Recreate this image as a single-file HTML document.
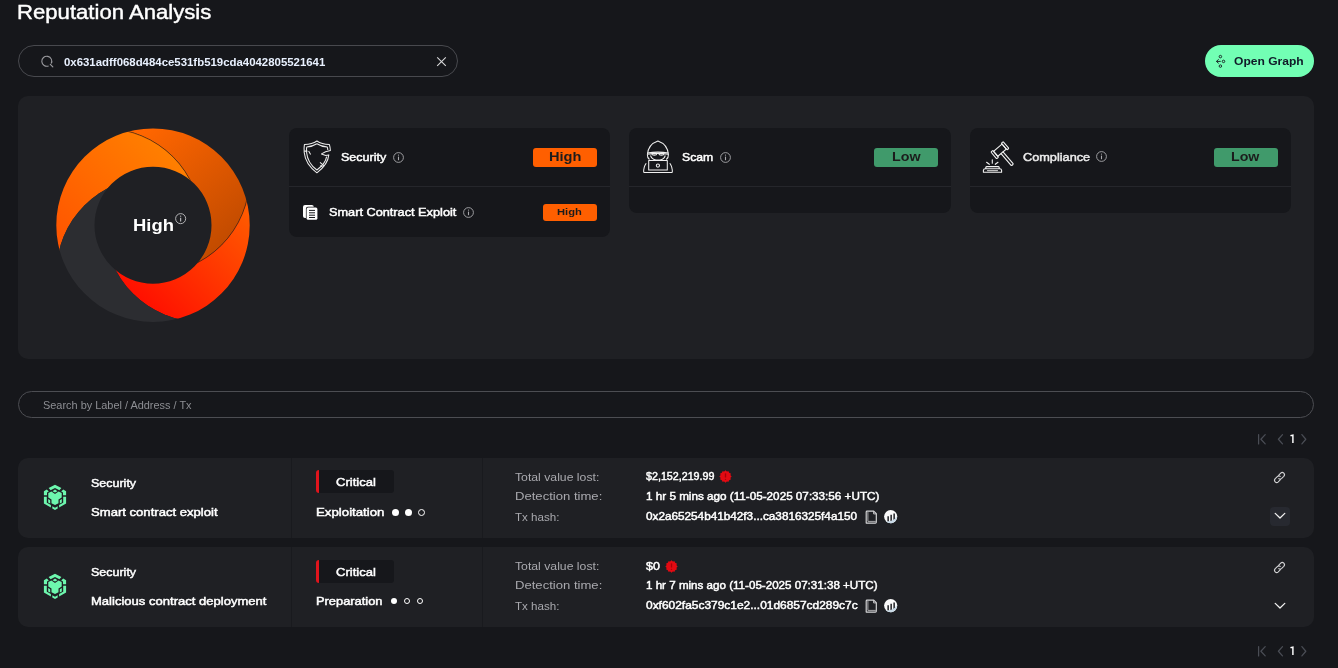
<!DOCTYPE html>
<html><head><meta charset="utf-8"><style>
*{box-sizing:border-box;margin:0;padding:0}
html,body{width:1338px;height:668px;overflow:hidden;background:#16171b;font-family:"Liberation Sans",sans-serif;color:#fff}
.abs{position:absolute}
.t{position:absolute;white-space:nowrap}
svg{position:absolute;overflow:visible}
</style></head><body>
<div class="t" style="left:16.69px;top:2.37px;font-size:20px;line-height:20px;font-weight:normal;color:#fff;letter-spacing:0.000px;transform:scaleX(1.1060);transform-origin:0 0;-webkit-text-stroke:0.4px #fff;">Reputation Analysis</div>
<div class="abs" style="left:18px;top:45px;width:440px;height:32px;border:1px solid #48494e;border-radius:16px"></div>
<svg style="left:40px;top:54px" width="16" height="16" viewBox="0 0 16 16"><path d="M8.6,11.9 A5,5 0 1,1 11.2,9.6" fill="none" stroke="#9a9a9e" stroke-width="1.1"/><path d="M10.3,10.4 L12.8,12.9" stroke="#9a9a9e" stroke-width="1.2" stroke-linecap="round"/></svg>
<div class="t" style="left:64.10px;top:57.43px;font-size:10.6px;line-height:10.6px;font-weight:bold;color:#e9f1ff;letter-spacing:0.000px;transform:scaleX(1.0767);transform-origin:0 0;">0x631adff068d484ce531fb519cda4042805521641</div>
<svg style="left:436px;top:56px" width="11" height="11" viewBox="0 0 11 11"><path d="M1.2,1.4 L9.8,9.9 M9.8,1.4 L1.2,9.9" stroke="#d8d8da" stroke-width="1.1"/></svg>
<div class="abs" style="left:1205px;top:45px;width:109px;height:32px;border-radius:16px;background:#72ffb4"></div>
<svg style="left:1213px;top:53px" width="14" height="16" viewBox="0 0 14 16"><g fill="none" stroke="#1b2a2a" stroke-width="1.0"><circle cx="7.4" cy="3.6" r="1.25"/><circle cx="10.5" cy="8.4" r="1.25"/><circle cx="7.4" cy="13.1" r="1.25"/><path d="M3.4,8.4 H7.7 M5.7,6.3 L3.4,8.4 L5.7,10.4"/></g></svg>
<div class="t" style="left:1233.90px;top:56.23px;font-size:10.6px;line-height:10.6px;font-weight:bold;color:#101a28;letter-spacing:0.000px;transform:scaleX(1.1392);transform-origin:0 0;">Open Graph</div>
<div class="abs" style="left:18px;top:96px;width:1296px;height:263px;border-radius:10px;background:#1f2024"></div>
<svg style="left:0;top:0" width="300" height="360" viewBox="0 0 300 360"><defs><clipPath id="cL"><circle cx="104.65" cy="225.2" r="96.7"/></clipPath><mask id="mL" maskUnits="userSpaceOnUse" x="0" y="0" width="300" height="360"><rect width="300" height="360" fill="#fff"/><circle cx="104.65" cy="225.2" r="96.7" fill="#000"/></mask><clipPath id="cU"><circle cx="153" cy="176.85" r="96.7"/></clipPath><mask id="mU" maskUnits="userSpaceOnUse" x="0" y="0" width="300" height="360"><rect width="300" height="360" fill="#fff"/><circle cx="153" cy="176.85" r="96.7" fill="#000"/></mask><clipPath id="cR"><circle cx="201.35" cy="225.2" r="96.7"/></clipPath><mask id="mR" maskUnits="userSpaceOnUse" x="0" y="0" width="300" height="360"><rect width="300" height="360" fill="#fff"/><circle cx="201.35" cy="225.2" r="96.7" fill="#000"/></mask><clipPath id="cD"><circle cx="153" cy="273.55" r="96.7"/></clipPath><mask id="mD" maskUnits="userSpaceOnUse" x="0" y="0" width="300" height="360"><rect width="300" height="360" fill="#fff"/><circle cx="153" cy="273.55" r="96.7" fill="#000"/></mask><linearGradient id="gO" gradientUnits="userSpaceOnUse" x1="175" y1="145" x2="65" y2="250"><stop offset="0" stop-color="#ff8200"/><stop offset="1" stop-color="#ff5500"/></linearGradient><linearGradient id="gD" gradientUnits="userSpaceOnUse" x1="145" y1="130" x2="235" y2="235"><stop offset="0" stop-color="#ff6600"/><stop offset="1" stop-color="#c24b00"/></linearGradient><linearGradient id="gR" gradientUnits="userSpaceOnUse" x1="250" y1="215" x2="150" y2="315"><stop offset="0" stop-color="#ff5a00"/><stop offset="1" stop-color="#ff0e00"/></linearGradient><clipPath id="ring"><path clip-rule="evenodd" d="M56.3,225.2a96.7,96.7 0 1,0 193.4,0a96.7,96.7 0 1,0 -193.4,0Z M94.5,225.2a58.5,58.5 0 1,0 117.0,0a58.5,58.5 0 1,0 -117.0,0Z"/></clipPath></defs><g clip-path="url(#ring)"><g clip-path="url(#cL)"><rect width="300" height="360" fill="url(#gO)" mask="url(#mD)"/></g><g clip-path="url(#cU)"><rect width="300" height="360" fill="url(#gD)" mask="url(#mL)"/></g><g clip-path="url(#cR)"><rect width="300" height="360" fill="url(#gR)" mask="url(#mU)"/></g><g clip-path="url(#cD)"><rect width="300" height="360" fill="#2c2d31" mask="url(#mR)"/></g><g clip-path="url(#cU)"><circle cx="104.65" cy="225.2" r="96.7" fill="none" stroke="#1a1a1a" stroke-opacity="0.8" stroke-width="0.7"/></g><g clip-path="url(#cR)"><circle cx="153" cy="176.85" r="96.7" fill="none" stroke="#1a1a1a" stroke-opacity="0.8" stroke-width="0.7"/></g></g></svg>
<div class="t" style="left:132.76px;top:217.19px;font-size:16.2px;line-height:16.2px;font-weight:bold;color:#fff;letter-spacing:0.000px;transform:scaleX(1.1386);transform-origin:0 0;">High</div>
<svg style="left:174.5px;top:212.9px" width="11.3" height="11.3" viewBox="0 0 11 11"><circle cx="5.5" cy="5.5" r="4.9" fill="none" stroke="#bdbdbf" stroke-width="0.9"/><path d="M5.5,4.6 V8.2" stroke="#bdbdbf" stroke-width="1.1"/><circle cx="5.5" cy="3.1" r="0.6" fill="#bdbdbf"/></svg>
<div class="abs" style="left:289px;top:128px;width:321px;height:109px;border-radius:8px;background:#16171b"></div>
<div class="abs" style="left:289px;top:186px;width:321px;height:1px;background:#25262b"></div>
<div class="abs" style="left:629px;top:128px;width:322px;height:85px;border-radius:8px;background:#16171b"></div>
<div class="abs" style="left:629px;top:186px;width:322px;height:1px;background:#25262b"></div>
<div class="abs" style="left:970px;top:128px;width:321px;height:85px;border-radius:8px;background:#16171b"></div>
<div class="abs" style="left:970px;top:186px;width:321px;height:1px;background:#25262b"></div>
<svg style="left:302px;top:140px" width="30" height="34" viewBox="0 0 30 34"><g fill="none" stroke="#ececec" stroke-width="1.05" stroke-linejoin="round">
<path d="M14.9,1 Q19.6,4.3 27.4,4.6 Q28.3,7.5 28.4,10.4 L23.6,11.8 L19.5,13.9 L23.7,15.4 L26.8,14.9 Q26,24.5 14.9,32.8 Q3.4,24.3 2.2,12.5 Q1.8,8 2.4,4.6 Q10.2,4.3 14.9,1Z"/>
<path d="M14.9,3.8 Q19.2,6.6 25.2,7 Q25.8,8.8 25.8,10" />
<path d="M24.6,16.6 Q23.6,23.4 14.9,30 Q5.6,23.2 4.6,12.5 Q4.3,9 4.7,7 Q10.6,6.6 14.9,3.8"/>
<path d="M2.2,11.1 H5.4 M6.6,11.1 L8.6,14.6 M18,22.4 L22.4,26.2 M18,25.6 L21.2,27.4"/>
</g></svg>
<div class="t" style="left:341.40px;top:151.80px;font-size:11.1px;line-height:11.1px;font-weight:normal;color:#fff;letter-spacing:0.000px;transform:scaleX(1.1301);transform-origin:0 0;-webkit-text-stroke:0.45px #fff;">Security</div>
<svg style="left:392.5px;top:151.6px" width="11" height="11" viewBox="0 0 11 11"><circle cx="5.5" cy="5.5" r="4.9" fill="none" stroke="#a9a9ad" stroke-width="0.9"/><path d="M5.5,4.6 V8.2" stroke="#a9a9ad" stroke-width="1.1"/><circle cx="5.5" cy="3.1" r="0.6" fill="#a9a9ad"/></svg>
<div class="abs" style="left:533px;top:148px;width:64px;height:19px;border-radius:3px;background:#ff5f00"></div>
<div class="t" style="left:549.40px;top:150.50px;font-size:12.4px;line-height:12.4px;font-weight:bold;color:#1c1c1c;letter-spacing:0.000px;transform:scaleX(1.1796);transform-origin:0 0;">High</div>
<svg style="left:302px;top:204px" width="17" height="17" viewBox="0 0 17 17">
<rect x="1" y="1" width="10.8" height="13" rx="2" fill="#fff"/>
<rect x="3.9" y="2.7" width="12.2" height="13.8" rx="2" fill="#16171b"/>
<rect x="4.6" y="3.4" width="10.8" height="12.4" rx="1.5" fill="#fff"/>
<path d="M7,6.4 H13 M7,8.8 H13 M7,11.2 H13 M7,13.5 H13" stroke="#16171b" stroke-width="1"/>
</svg>
<div class="t" style="left:328.90px;top:206.93px;font-size:10.6px;line-height:10.6px;font-weight:normal;color:#fff;letter-spacing:0.000px;transform:scaleX(1.2015);transform-origin:0 0;-webkit-text-stroke:0.45px #fff;">Smart Contract Exploit</div>
<svg style="left:463.4px;top:206.7px" width="11" height="11" viewBox="0 0 11 11"><circle cx="5.5" cy="5.5" r="4.9" fill="none" stroke="#a9a9ad" stroke-width="0.9"/><path d="M5.5,4.6 V8.2" stroke="#a9a9ad" stroke-width="1.1"/><circle cx="5.5" cy="3.1" r="0.6" fill="#a9a9ad"/></svg>
<div class="abs" style="left:543px;top:204px;width:54px;height:17px;border-radius:3px;background:#ff5f00"></div>
<div class="t" style="left:557.20px;top:207.27px;font-size:9.6px;line-height:9.6px;font-weight:bold;color:#1c1c1c;letter-spacing:0.000px;transform:scaleX(1.1653);transform-origin:0 0;">High</div>
<svg style="left:642px;top:140px" width="32" height="34" viewBox="0 0 32 34"><g fill="none" stroke="#f0f0f0" stroke-width="1.05" stroke-linejoin="round">
<path d="M5.4,14.8 Q6,4.5 15.9,1.1 Q25.8,4.5 26.4,14.8 Q26.6,17.6 24.3,19.5"/>
<path d="M5.4,14.8 Q5.2,17.6 7.5,19.5"/>
<path d="M5.3,13 Q15.9,11.3 26.5,13"/>
<path d="M5.3,14.2 Q15.9,12.5 26.5,14.2"/>
<ellipse cx="12.3" cy="14" rx="2.4" ry="1.1"/><ellipse cx="19.5" cy="14" rx="2.4" ry="1.1"/>
<path d="M8.5,15.5 Q10,19.5 14,20 H18 Q22,19.5 23.3,15.5"/>
<rect x="6.7" y="20.5" width="18.6" height="9.5"/>
<circle cx="15.9" cy="25.6" r="1.6"/>
<path d="M1.7,32.4 H30.3 M1.7,32.4 Q1.4,27 4.2,23.3 M30.3,32.4 Q30.6,27 27.8,23.3"/>
</g></svg>
<div class="t" style="left:681.80px;top:151.87px;font-size:10.9px;line-height:10.9px;font-weight:normal;color:#fff;letter-spacing:0.000px;transform:scaleX(1.1201);transform-origin:0 0;-webkit-text-stroke:0.45px #fff;">Scam</div>
<svg style="left:719.5px;top:151.6px" width="11" height="11" viewBox="0 0 11 11"><circle cx="5.5" cy="5.5" r="4.9" fill="none" stroke="#a9a9ad" stroke-width="0.9"/><path d="M5.5,4.6 V8.2" stroke="#a9a9ad" stroke-width="1.1"/><circle cx="5.5" cy="3.1" r="0.6" fill="#a9a9ad"/></svg>
<div class="abs" style="left:874px;top:148px;width:64px;height:19px;border-radius:3px;background:#409a6b"></div>
<div class="t" style="left:891.80px;top:150.50px;font-size:12.4px;line-height:12.4px;font-weight:bold;color:#1c1c1c;letter-spacing:0.000px;transform:scaleX(1.1537);transform-origin:0 0;">Low</div>
<svg style="left:981px;top:139px" width="36" height="36" viewBox="0 0 36 36"><g fill="none" stroke="#f2f2f2" stroke-width="1.1" stroke-linejoin="round" stroke-linecap="round">
<g transform="translate(18.9 11.2) rotate(49.5)"><rect x="-3.3" y="-5.6" width="6.6" height="11.2"/><rect x="-4.4" y="-8" width="8.8" height="2.4" rx="0.6"/><rect x="-4.4" y="5.6" width="8.8" height="2.4" rx="0.6"/><path d="M3.3,-1.3 H18.8 Q20.1,0 18.8,1.3 H3.3"/></g>
<path d="M2.4,33.3 H20.6 V31.3 Q20.4,30 18.8,29.8 H4.2 Q2.6,30 2.4,31.3Z M4.8,29.8 V28.4 Q5,27.6 6,27.6 H17 Q18,27.6 18.2,28.4 V29.8"/><path d="M6.5,31.6 H16.5" stroke="#bdbdbd"/>
<path d="M11.3,20.8 V24.2 M5.6,23.3 L8.3,25.3 M17,23.3 L14.3,25.3"/>
</g></svg>
<div class="t" style="left:1022.60px;top:151.60px;font-size:11.1px;line-height:11.1px;font-weight:normal;color:#ececec;letter-spacing:0.000px;transform:scaleX(1.1471);transform-origin:0 0;-webkit-text-stroke:0.45px #ececec;">Compliance</div>
<svg style="left:1096.4px;top:151.4px" width="11" height="11" viewBox="0 0 11 11"><circle cx="5.5" cy="5.5" r="4.9" fill="none" stroke="#a9a9ad" stroke-width="0.9"/><path d="M5.5,4.6 V8.2" stroke="#a9a9ad" stroke-width="1.1"/><circle cx="5.5" cy="3.1" r="0.6" fill="#a9a9ad"/></svg>
<div class="abs" style="left:1214px;top:148px;width:64px;height:19px;border-radius:3px;background:#409a6b"></div>
<div class="t" style="left:1231.20px;top:150.50px;font-size:12.4px;line-height:12.4px;font-weight:bold;color:#1c1c1c;letter-spacing:0.000px;transform:scaleX(1.1457);transform-origin:0 0;">Low</div>
<div class="abs" style="left:18px;top:391px;width:1296px;height:27px;border:1px solid #4c4d52;border-radius:14px"></div>
<div class="t" style="left:43.20px;top:399.84px;font-size:10.7px;line-height:10.7px;font-weight:normal;color:#8d8e93;letter-spacing:0.000px;transform:scaleX(1.0219);transform-origin:0 0;">Search by Label / Address / Tx</div>
<svg style="left:1250px;top:431px" width="64" height="16" viewBox="0 0 64 16"><g fill="none" stroke="#4a4d55" stroke-width="1.25" stroke-linecap="round" stroke-linejoin="round"><path d="M8.6,3.6 V12.9 M15.2,3.6 L10.9,8.25 L15.2,12.9"/><path d="M32.5,3.6 L28.4,8.25 L32.5,12.9"/><path d="M51.9,3.6 L55.8,8.25 L51.9,12.9"/></g><path d="M40.4,4.6 L42.9,4.2 V12.1" fill="none" stroke="#fff" stroke-width="1.45" stroke-linejoin="miter"/></svg>
<svg style="left:1250px;top:643px" width="64" height="16" viewBox="0 0 64 16"><g fill="none" stroke="#4a4d55" stroke-width="1.25" stroke-linecap="round" stroke-linejoin="round"><path d="M8.6,3.6 V12.9 M15.2,3.6 L10.9,8.25 L15.2,12.9"/><path d="M32.5,3.6 L28.4,8.25 L32.5,12.9"/><path d="M51.9,3.6 L55.8,8.25 L51.9,12.9"/></g><path d="M40.4,4.6 L42.9,4.2 V12.1" fill="none" stroke="#fff" stroke-width="1.45" stroke-linejoin="miter"/></svg>
<div class="abs" style="left:18px;top:458px;width:1296px;height:80px;border-radius:10px;background:#1f2024"></div>
<div class="abs" style="left:291px;top:458px;width:1px;height:80px;background:#191a1e"></div>
<div class="abs" style="left:482px;top:458px;width:1px;height:80px;background:#191a1e"></div>
<svg style="left:42px;top:483px" width="26" height="29" viewBox="0 0 26 29"><g fill="#6df7ae"><polygon points="6.6,5.1 13,1.7 19.4,5.1 17.4,7.3 13,5.1 8.6,7.3"/><polygon points="1.9,8.3 4.8,6.5 6.8,8.6 5.0,9.6 5.0,12.2 1.9,12.2"/><polygon points="24.1,8.3 21.2,6.5 19.2,8.6 21.0,9.6 21.0,12.2 24.1,12.2"/><polygon points="1.9,13.7 4.8,13.7 4.8,19.7 8.9,22.0 8.9,24.5 1.9,20.6"/><polygon points="24.1,13.7 21.2,13.7 21.2,19.7 17.1,22.0 17.1,24.5 24.1,20.6"/><polygon points="6.3,10.1 9.4,8.6 13,10.9 16.6,8.6 19.7,10.1 19.7,14.6 16.5,16.4 16.5,20.3 13,22.0 9.5,20.3 9.5,16.4 6.3,14.6"/><polygon points="13,6.5 15.5,8.2 13,9.6 10.5,8.2"/><polygon points="6.2,16.0 8.2,17.2 8.2,20.5 6.2,19.4"/><polygon points="19.8,16.0 17.8,17.2 17.8,20.5 19.8,19.4"/><polygon points="10.3,23.2 13,24.7 15.7,23.2 15.7,25.4 13,27.0 10.3,25.4"/></g></svg>
<div class="t" style="left:91.10px;top:477.50px;font-size:11.1px;line-height:11.1px;font-weight:normal;color:#fff;letter-spacing:0.000px;transform:scaleX(1.1252);transform-origin:0 0;-webkit-text-stroke:0.45px #fff;">Security</div>
<div class="t" style="left:91.10px;top:506.79px;font-size:11.0px;line-height:11.0px;font-weight:normal;color:#fff;letter-spacing:0.000px;transform:scaleX(1.1898);transform-origin:0 0;-webkit-text-stroke:0.45px #fff;">Smart contract exploit</div>
<div class="abs" style="left:316px;top:470px;width:78px;height:23px;border-radius:3px;background:#16171b;border-left:3px solid #e0141c"></div>
<div class="t" style="left:336.30px;top:476.52px;font-size:11.2px;line-height:11.2px;font-weight:normal;color:#fff;letter-spacing:0.000px;transform:scaleX(1.1662);transform-origin:0 0;-webkit-text-stroke:0.45px #fff;">Critical</div>
<div class="t" style="left:316.20px;top:506.97px;font-size:10.9px;line-height:10.9px;font-weight:normal;color:#fff;letter-spacing:0.000px;transform:scaleX(1.2161);transform-origin:0 0;-webkit-text-stroke:0.45px #fff;">Exploitation</div>
<div class="abs" style="left:392.1px;top:508.6px;width:7.1px;height:7.1px;border-radius:50%;background:#fff"></div>
<div class="abs" style="left:404.9px;top:508.6px;width:7.1px;height:7.1px;border-radius:50%;background:#fff"></div>
<div class="abs" style="left:417.7px;top:508.6px;width:7.1px;height:7.1px;border-radius:50%;border:1.3px solid #fff"></div>
<div class="t" style="left:515.40px;top:471.83px;font-size:10.6px;line-height:10.6px;font-weight:normal;color:#a9a9ae;letter-spacing:0.000px;transform:scaleX(1.1544);transform-origin:0 0;">Total value lost:</div>
<div class="t" style="left:515.40px;top:491.03px;font-size:10.6px;line-height:10.6px;font-weight:normal;color:#a9a9ae;letter-spacing:0.000px;transform:scaleX(1.2351);transform-origin:0 0;">Detection time:</div>
<div class="t" style="left:515.40px;top:511.83px;font-size:10.6px;line-height:10.6px;font-weight:normal;color:#a9a9ae;letter-spacing:0.000px;transform:scaleX(1.0937);transform-origin:0 0;">Tx hash:</div>
<div class="t" style="left:646.30px;top:471.01px;font-size:10.5px;line-height:10.5px;font-weight:normal;color:#fff;letter-spacing:0.000px;transform:scaleX(1.0192);transform-origin:0 0;-webkit-text-stroke:0.45px #fff;">$2,152,219.99</div>
<svg style="left:719.1px;top:469.8px" width="13" height="13" viewBox="0 0 12.8 12.8"><polygon points="6.40,0.35 7.71,1.52 9.42,1.16 9.97,2.83 11.64,3.38 11.28,5.09 12.45,6.40 11.28,7.71 11.64,9.42 9.97,9.97 9.42,11.64 7.71,11.28 6.40,12.45 5.09,11.28 3.38,11.64 2.83,9.97 1.16,9.43 1.52,7.71 0.35,6.40 1.52,5.09 1.16,3.37 2.83,2.83 3.37,1.16 5.09,1.52" fill="#e30a12"/><path d="M6.4,3.3 V7.4" stroke="#a80008" stroke-width="1.3"/><circle cx="6.4" cy="9.2" r="0.7" fill="#a80008"/></svg>
<div class="t" style="left:646.30px;top:491.11px;font-size:10.5px;line-height:10.5px;font-weight:normal;color:#fff;letter-spacing:0.000px;transform:scaleX(1.1132);transform-origin:0 0;-webkit-text-stroke:0.45px #fff;">1 hr 5 mins ago (11-05-2025 07:33:56 +UTC)</div>
<div class="t" style="left:646.30px;top:511.41px;font-size:10.5px;line-height:10.5px;font-weight:normal;color:#fff;letter-spacing:0.000px;transform:scaleX(1.1189);transform-origin:0 0;-webkit-text-stroke:0.45px #fff;">0x2a65254b41b42f3...ca3816325f4a150</div>
<svg style="left:865.3px;top:509.5px" width="13" height="15" viewBox="0 0 13 15"><g fill="none" stroke-linejoin="round"><path d="M1.2,13.1 V2 Q1.2,1.1 2.1,1.1 H8.7 L11.3,3.7 V12.2 Q11.3,13.1 10.4,13.1 Z" stroke="#d6d6d8" stroke-width="1.15"/><path d="M2.9,1.6 V11.4 H10.9" stroke="#a8a8ab" stroke-width="1"/><path d="M8.6,1.3 V3.9 H11.1" stroke="#d6d6d8" stroke-width="0.9"/></g></svg>
<svg style="left:883.6px;top:509.7px" width="14" height="14" viewBox="0 0 14 14">
<circle cx="6.7" cy="6.6" r="6.6" fill="#fafafa"/>
<path d="M1.6,11.3 Q8,12.2 13,6.3 Q13.2,10.8 8.6,13 Q4.3,13.8 1.6,11.3Z" fill="#c8d9e6"/>
<path d="M3.4,11.2 V6.3 H4.9 V11.2Z M6.4,11 V4.7 H7.9 V10.6Z M9.4,9.7 V3.4 H10.9 V8.7Z" fill="#1f2024"/>
</svg>
<svg style="left:1273.3px;top:471px" width="13" height="13" viewBox="0 0 13 13"><g fill="none" stroke="#d2d2d4" stroke-width="1.1" stroke-linecap="round"><path d="M5.6,4.3 L7.7,2.2 Q9.3,0.7 10.8,2.2 Q12.3,3.7 10.8,5.3 L8.7,7.4 Q7.2,8.8 5.8,7.6"/><path d="M7.4,8.7 L5.3,10.8 Q3.7,12.3 2.2,10.8 Q0.7,9.3 2.2,7.7 L4.3,5.6 Q5.8,4.2 7.2,5.4"/></g></svg>
<div class="abs" style="left:1270px;top:507px;width:20px;height:19px;border-radius:4px;background:#272930"></div>
<svg style="left:1274px;top:512px" width="12" height="8" viewBox="0 0 12 8"><path d="M1.2,1.4 L6,6 L10.8,1.4" fill="none" stroke="#f2f2f2" stroke-width="1.3" stroke-linecap="round" stroke-linejoin="round"/></svg>
<div class="abs" style="left:18px;top:547px;width:1296px;height:80px;border-radius:10px;background:#1f2024"></div>
<div class="abs" style="left:291px;top:547px;width:1px;height:80px;background:#191a1e"></div>
<div class="abs" style="left:482px;top:547px;width:1px;height:80px;background:#191a1e"></div>
<svg style="left:42px;top:572px" width="26" height="29" viewBox="0 0 26 29"><g fill="#6df7ae"><polygon points="6.6,5.1 13,1.7 19.4,5.1 17.4,7.3 13,5.1 8.6,7.3"/><polygon points="1.9,8.3 4.8,6.5 6.8,8.6 5.0,9.6 5.0,12.2 1.9,12.2"/><polygon points="24.1,8.3 21.2,6.5 19.2,8.6 21.0,9.6 21.0,12.2 24.1,12.2"/><polygon points="1.9,13.7 4.8,13.7 4.8,19.7 8.9,22.0 8.9,24.5 1.9,20.6"/><polygon points="24.1,13.7 21.2,13.7 21.2,19.7 17.1,22.0 17.1,24.5 24.1,20.6"/><polygon points="6.3,10.1 9.4,8.6 13,10.9 16.6,8.6 19.7,10.1 19.7,14.6 16.5,16.4 16.5,20.3 13,22.0 9.5,20.3 9.5,16.4 6.3,14.6"/><polygon points="13,6.5 15.5,8.2 13,9.6 10.5,8.2"/><polygon points="6.2,16.0 8.2,17.2 8.2,20.5 6.2,19.4"/><polygon points="19.8,16.0 17.8,17.2 17.8,20.5 19.8,19.4"/><polygon points="10.3,23.2 13,24.7 15.7,23.2 15.7,25.4 13,27.0 10.3,25.4"/></g></svg>
<div class="t" style="left:91.10px;top:566.50px;font-size:11.1px;line-height:11.1px;font-weight:normal;color:#fff;letter-spacing:0.000px;transform:scaleX(1.1252);transform-origin:0 0;-webkit-text-stroke:0.45px #fff;">Security</div>
<div class="t" style="left:91.10px;top:595.79px;font-size:11.0px;line-height:11.0px;font-weight:normal;color:#fff;letter-spacing:0.000px;transform:scaleX(1.1859);transform-origin:0 0;-webkit-text-stroke:0.45px #fff;">Malicious contract deployment</div>
<div class="abs" style="left:316px;top:560px;width:78px;height:23px;border-radius:3px;background:#16171b;border-left:3px solid #e0141c"></div>
<div class="t" style="left:336.30px;top:566.52px;font-size:11.2px;line-height:11.2px;font-weight:normal;color:#fff;letter-spacing:0.000px;transform:scaleX(1.1662);transform-origin:0 0;-webkit-text-stroke:0.45px #fff;">Critical</div>
<div class="t" style="left:316.20px;top:595.97px;font-size:10.9px;line-height:10.9px;font-weight:normal;color:#fff;letter-spacing:0.000px;transform:scaleX(1.1805);transform-origin:0 0;-webkit-text-stroke:0.45px #fff;">Preparation</div>
<div class="abs" style="left:391.0px;top:597.9px;width:6.4px;height:6.4px;border-radius:50%;background:#fff"></div>
<div class="abs" style="left:403.8px;top:597.9px;width:6.4px;height:6.4px;border-radius:50%;border:1.3px solid #fff"></div>
<div class="abs" style="left:416.6px;top:597.9px;width:6.4px;height:6.4px;border-radius:50%;border:1.3px solid #fff"></div>
<div class="t" style="left:515.40px;top:560.83px;font-size:10.6px;line-height:10.6px;font-weight:normal;color:#a9a9ae;letter-spacing:0.000px;transform:scaleX(1.1544);transform-origin:0 0;">Total value lost:</div>
<div class="t" style="left:515.40px;top:580.03px;font-size:10.6px;line-height:10.6px;font-weight:normal;color:#a9a9ae;letter-spacing:0.000px;transform:scaleX(1.2351);transform-origin:0 0;">Detection time:</div>
<div class="t" style="left:515.40px;top:600.83px;font-size:10.6px;line-height:10.6px;font-weight:normal;color:#a9a9ae;letter-spacing:0.000px;transform:scaleX(1.0937);transform-origin:0 0;">Tx hash:</div>
<div class="t" style="left:646.30px;top:561.01px;font-size:10.5px;line-height:10.5px;font-weight:normal;color:#fff;letter-spacing:0.000px;transform:scaleX(1.1909);transform-origin:0 0;-webkit-text-stroke:0.45px #fff;">$0</div>
<svg style="left:664.9px;top:559.8px" width="13" height="13" viewBox="0 0 12.8 12.8"><polygon points="6.40,0.35 7.71,1.52 9.42,1.16 9.97,2.83 11.64,3.38 11.28,5.09 12.45,6.40 11.28,7.71 11.64,9.42 9.97,9.97 9.42,11.64 7.71,11.28 6.40,12.45 5.09,11.28 3.38,11.64 2.83,9.97 1.16,9.43 1.52,7.71 0.35,6.40 1.52,5.09 1.16,3.37 2.83,2.83 3.37,1.16 5.09,1.52" fill="#e30a12"/><path d="M6.4,3.3 V7.4" stroke="#a80008" stroke-width="1.3"/><circle cx="6.4" cy="9.2" r="0.7" fill="#a80008"/></svg>
<div class="t" style="left:646.30px;top:580.11px;font-size:10.5px;line-height:10.5px;font-weight:normal;color:#fff;letter-spacing:0.000px;transform:scaleX(1.1046);transform-origin:0 0;-webkit-text-stroke:0.45px #fff;">1 hr 7 mins ago (11-05-2025 07:31:38 +UTC)</div>
<div class="t" style="left:646.30px;top:600.41px;font-size:10.5px;line-height:10.5px;font-weight:normal;color:#fff;letter-spacing:0.000px;transform:scaleX(1.1366);transform-origin:0 0;-webkit-text-stroke:0.45px #fff;">0xf602fa5c379c1e2...01d6857cd289c7c</div>
<svg style="left:865.3px;top:598.5px" width="13" height="15" viewBox="0 0 13 15"><g fill="none" stroke-linejoin="round"><path d="M1.2,13.1 V2 Q1.2,1.1 2.1,1.1 H8.7 L11.3,3.7 V12.2 Q11.3,13.1 10.4,13.1 Z" stroke="#d6d6d8" stroke-width="1.15"/><path d="M2.9,1.6 V11.4 H10.9" stroke="#a8a8ab" stroke-width="1"/><path d="M8.6,1.3 V3.9 H11.1" stroke="#d6d6d8" stroke-width="0.9"/></g></svg>
<svg style="left:883.6px;top:598.7px" width="14" height="14" viewBox="0 0 14 14">
<circle cx="6.7" cy="6.6" r="6.6" fill="#fafafa"/>
<path d="M1.6,11.3 Q8,12.2 13,6.3 Q13.2,10.8 8.6,13 Q4.3,13.8 1.6,11.3Z" fill="#c8d9e6"/>
<path d="M3.4,11.2 V6.3 H4.9 V11.2Z M6.4,11 V4.7 H7.9 V10.6Z M9.4,9.7 V3.4 H10.9 V8.7Z" fill="#1f2024"/>
</svg>
<svg style="left:1273.3px;top:561px" width="13" height="13" viewBox="0 0 13 13"><g fill="none" stroke="#d2d2d4" stroke-width="1.1" stroke-linecap="round"><path d="M5.6,4.3 L7.7,2.2 Q9.3,0.7 10.8,2.2 Q12.3,3.7 10.8,5.3 L8.7,7.4 Q7.2,8.8 5.8,7.6"/><path d="M7.4,8.7 L5.3,10.8 Q3.7,12.3 2.2,10.8 Q0.7,9.3 2.2,7.7 L4.3,5.6 Q5.8,4.2 7.2,5.4"/></g></svg>
<svg style="left:1274px;top:602px" width="12" height="8" viewBox="0 0 12 8"><path d="M1.2,1.4 L6,6 L10.8,1.4" fill="none" stroke="#f2f2f2" stroke-width="1.3" stroke-linecap="round" stroke-linejoin="round"/></svg>
</body></html>
